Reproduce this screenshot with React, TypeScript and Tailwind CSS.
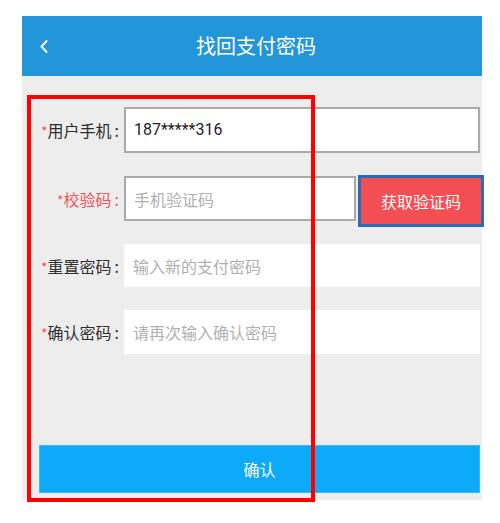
const font = { fontFamily: '"Noto Sans CJK SC", Roboto, sans-serif' };

function Label({ text, red }: { text: string; red?: boolean }) {
  return (
    <div className={`w-[102px] shrink-0 pr-[5px] text-right text-[16px] ${red ? 'text-[#f4555a]' : 'text-[#2e2e2e]'}`}>
      <span className="text-[#f4555a] text-[14px]">*</span>
      {text}
      <span className="ml-[3px]">:</span>
    </div>
  );
}

export default function App() {
  return (
    <div className="relative min-h-[523px] bg-white pl-[22px] pt-[16px]" style={font}>
      <div className="w-[460px]">
        <header className="relative flex h-[60px] items-center justify-center bg-[#2396da]">
          <svg className="absolute left-[17px] top-[23px]" width="10" height="15" viewBox="0 0 10 15">
            <path d="M8 1.5 L2.5 7.5 L8 13.5" fill="none" stroke="white" strokeWidth="2" />
          </svg>
          <h1 className="ml-[8px] text-[20px] text-white">找回支付密码</h1>
        </header>

        <main className="flex h-[424px] flex-col bg-[#ededed] pr-[2px]">
          <div className="mt-[31px] flex h-[46px] items-center">
            <Label text="用户手机" />
            <div className="flex h-full flex-1 items-center border-2 border-[#a9a9a9] bg-white pl-[8px] text-[16px] text-[#222]" style={{ fontFamily: 'Roboto, sans-serif' }}>
              187*****316
            </div>
          </div>

          <div className="mt-[22px] flex h-[52px] items-start">
            <div className="mt-[1px] flex h-[45px] items-center">
              <Label text="校验码" red />
            </div>
            <div className="mt-[1px] flex h-[45px] w-[232px] items-center border-2 border-[#a9a9a9] bg-white pl-[8px] text-[16px] text-[#b0b0b0]">
              手机验证码
            </div>
            <button className="ml-[2px] mr-[-4px] flex h-[52px] w-[126px] items-center justify-center border-[3px] border-[#2a6cb3] bg-[#f34e53] text-[16px] text-white">
              获取验证码
            </button>
          </div>

          <div className="mt-[17px] flex h-[43px] items-center">
            <Label text="重置密码" />
            <div className="flex h-full flex-1 items-center bg-white pl-[9px] text-[16px] text-[#b0b0b0]">
              输入新的支付密码
            </div>
          </div>

          <div className="mt-[23px] flex h-[44px] items-center">
            <Label text="确认密码" />
            <div className="flex h-full flex-1 items-center bg-white pl-[9px] text-[16px] text-[#b0b0b0]">
              请再次输入确认密码
            </div>
          </div>

          <button className="ml-[17px] mt-[91px] flex h-[48px] items-center justify-center border border-[#3ab8f8] bg-[#0eaafa] text-[16px] text-white">
            确认
          </button>
        </main>
      </div>

      <div className="pointer-events-none absolute left-[27px] top-[95px] h-[407px] w-[288px] border-4 border-[#ff0000]" />
    </div>
  );
}
